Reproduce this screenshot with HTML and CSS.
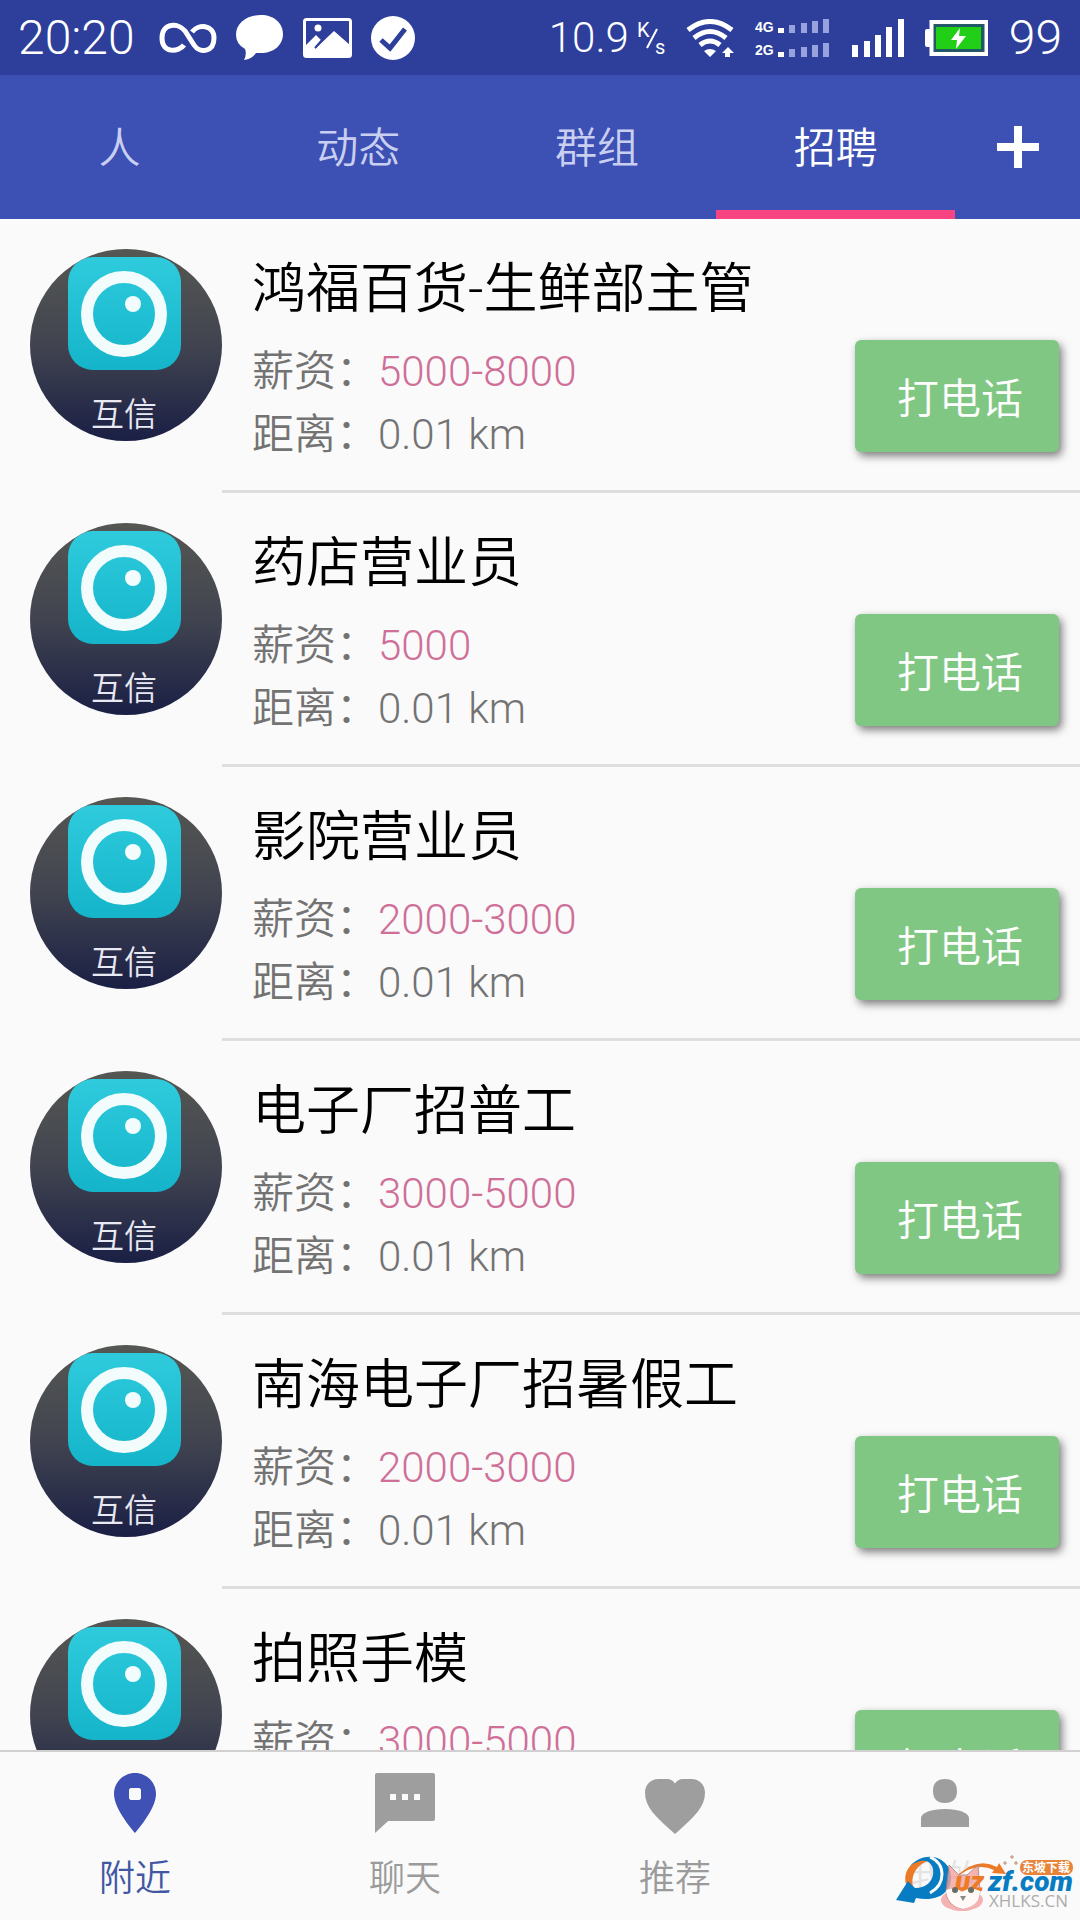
FILE: index.html
```html
<!DOCTYPE html>
<html lang="zh-CN">
<head>
<meta charset="utf-8">
<meta name="viewport" content="width=device-width, initial-scale=1">
<title>招聘</title>
<link rel="stylesheet" href="styles.css">
</head>
<body>
<svg class="defs" aria-hidden="true">
  <defs>
    <linearGradient id="night" x1="0" y1="0" x2="0" y2="1">
      <stop offset="0" stop-color="#555753"/><stop offset=".5" stop-color="#41444f"/><stop offset="1" stop-color="#1a1f45"/>
    </linearGradient>
    <linearGradient id="aqua" x1="0" y1="0" x2="0" y2="1">
      <stop offset="0" stop-color="#2fcbdd"/><stop offset="1" stop-color="#14b4ca"/>
    </linearGradient>
    <clipPath id="round"><circle cx="96" cy="96" r="96"/></clipPath>
    <symbol id="avatar" viewBox="0 0 192 192">
      <g clip-path="url(#round)">
        <rect width="192" height="192" fill="url(#night)"/>
        <rect x="38" y="8" width="113" height="113" rx="25" fill="url(#aqua)"/>
        <circle cx="94" cy="65" r="37" fill="none" stroke="#f2fcfd" stroke-width="12"/>
        <circle cx="103" cy="55" r="8" fill="#f2fcfd"/>
        <text x="94" y="177" class="avatar-text">互信</text>
      </g>
    </symbol>
  </defs>
</svg>

<div class="app">
  <header class="status">
    <span class="clock">20:20</span>
    <svg class="s-loop" width="58" height="44" viewBox="0 0 58 44"><g fill="none" stroke="#fff" stroke-width="5"><path d="M25 29C20 36 3 38 3 22S20 7 26 15L35 29C41 38 55 36 55 22S39 8 33 16" /></g></svg>
    <svg class="s-chat" width="48" height="46" viewBox="0 0 48 46"><path fill="#fff" d="M25 0C38 0 47 8 47 19S38 38 25 38H20Q16 44 8 45Q11 39 9 34Q0 29 0 20C0 8 11 0 25 0Z"/></svg>
    <svg class="s-image" width="49" height="40" viewBox="0 0 49 40"><rect x="1.500" y="1.500" width="46" height="37" rx="2" fill="none" stroke="#fff" stroke-width="3"/><circle cx="15" cy="10" r="3.500" fill="#fff"/><path fill="#fff" d="M2 38V28L13 17L18 22L12 31L31 13L47 27V38Z"/><path d="M12 30L20 21" stroke="#2d3e9b" stroke-width="2"/></svg>
    <svg class="s-check" width="44" height="44" viewBox="0 0 44 44"><circle cx="22" cy="22" r="22" fill="#fff"/><path d="M10 24L19 32L34 13" fill="none" stroke="#2d3e9b" stroke-width="5"/></svg>
    <span class="spacer"></span>
    <span class="speed">10.9</span>
    <span class="unit"><svg width="31" height="38" viewBox="0 0 31 38"><text x="0" y="18" class="unit-text">K</text><path d="M10 29L20 10" stroke="#fff" stroke-width="2"/><text x="18" y="35" class="unit-text">s</text></svg></span>
    <svg class="s-wifi" width="49" height="38" viewBox="0 0 49 38"><g fill="none" stroke="#fff" stroke-width="5"><path d="M2 11Q24 -6 46 11"/><path d="M8 19Q24 6 40 19"/><path d="M14 26Q24 18 34 26"/></g><path fill="#fff" d="M18 32Q24 28 30 32L24 38ZM42 28L48 34H44V38H39V34H36Z"/></svg>
    <svg class="s-dual" width="76" height="40" viewBox="0 0 76 40"><g class="net"><text x="0" y="14">4G</text><text x="0" y="37">2G</text></g><g fill="#fff"><rect x="23" y="10" width="6" height="5"/><rect x="23" y="34" width="6" height="5"/></g><g fill="#98a2dc"><path d="M34 7h6v8h-6zM46 5h6v10h-6zM57 3h6v12h-6zM68 1h6v14h-6zM34 31h6v8h-6zM46 29h6v10h-6zM57 27h6v12h-6zM68 25h6v14h-6z"/></g></svg>
    <svg class="s-signal" width="52" height="38" viewBox="0 0 52 38"><path fill="#fff" d="M0 26h6v12H0zM12 22h6v16h-6zM23 16h6v22h-6zM34 8h6v30h-6zM46 0h6v38h-6z"/></svg>
    <svg class="s-battery" width="63" height="36" viewBox="0 0 63 36"><rect x="6.500" y="2" width="55" height="32" fill="#235867" stroke="#fff" stroke-width="4"/><rect x="0" y="9" width="6" height="18" rx="2" fill="#fff"/><rect x="11" y="7" width="45" height="22" fill="#22cf17"/><path fill="#fff" d="M35 8L26 20H32L31 29L41 16H34Z"/></svg>
    <span class="charge">99</span>
  </header>

  <nav class="tabs">
    <a href="#people" class="tab">人</a>
    <a href="#moments" class="tab">动态</a>
    <a href="#groups" class="tab">群组</a>
    <a href="#jobs" class="tab active" aria-current="page">招聘</a>
    <button class="add" aria-label="添加"><svg width="42" height="42" viewBox="0 0 42 42"><path d="M21 0V42M0 21H42" stroke="#fff" stroke-width="8"/></svg></button>
  </nav>

  <main class="jobs">
    <article class="job">
      <svg class="avatar"><use href="#avatar"/></svg>
      <div class="body"><div class="info"><h2>鸿福百货-生鲜部主管</h2><p>薪资：<span class="pay">5000-8000</span></p><p>距离：0.01 km</p></div><button class="call">打电话</button></div>
    </article>
    <article class="job">
      <svg class="avatar"><use href="#avatar"/></svg>
      <div class="body"><div class="info"><h2>药店营业员</h2><p>薪资：<span class="pay">5000</span></p><p>距离：0.01 km</p></div><button class="call">打电话</button></div>
    </article>
    <article class="job">
      <svg class="avatar"><use href="#avatar"/></svg>
      <div class="body"><div class="info"><h2>影院营业员</h2><p>薪资：<span class="pay">2000-3000</span></p><p>距离：0.01 km</p></div><button class="call">打电话</button></div>
    </article>
    <article class="job">
      <svg class="avatar"><use href="#avatar"/></svg>
      <div class="body"><div class="info"><h2>电子厂招普工</h2><p>薪资：<span class="pay">3000-5000</span></p><p>距离：0.01 km</p></div><button class="call">打电话</button></div>
    </article>
    <article class="job">
      <svg class="avatar"><use href="#avatar"/></svg>
      <div class="body"><div class="info"><h2>南海电子厂招暑假工</h2><p>薪资：<span class="pay">2000-3000</span></p><p>距离：0.01 km</p></div><button class="call">打电话</button></div>
    </article>
    <article class="job">
      <svg class="avatar"><use href="#avatar"/></svg>
      <div class="body"><div class="info"><h2>拍照手模</h2><p>薪资：<span class="pay">3000-5000</span></p><p>距离：0.01 km</p></div><button class="call">打电话</button></div>
    </article>
  </main>

  <nav class="bottom">
    <a href="#nearby" class="item active" aria-current="page"><svg viewBox="0 0 24 24"><path fill-rule="evenodd" d="M12 2C8.100 2 5 5.100 5 9c0 5.200 7 13 7 13s7-7.800 7-13c0-3.900-3.100-7-7-7zm-1.500 5h3l.5.500v3l-.5.500h-3l-.5-.5v-3z"/></svg>附近</a>
    <a href="#chat" class="item"><svg viewBox="0 0 24 24"><path fill-rule="evenodd" d="M21.300 2H2.700Q2 2 2 2.700V22l4.400-4H21.300Q22 18 22 17.300V2.700Q22 2 21.300 2zM9 11H7V9h2v2zm4 0h-2V9h2v2zm4 0h-2V9h2v2z"/></svg>聊天</a>
    <a href="#recommend" class="item"><svg viewBox="0 0 24 24"><path d="M12 22.300l-1.500-1.300C5.400 16.400 2 13.300 2 8.500 2 5.900 4 4 6.500 4H9.500Q11 4 12 5.500Q13 4 14.500 4H17.500C20 4 22 5.900 22 8.500c0 4.800-3.400 7.900-8.500 12.500z"/></svg>推荐</a>
    <a href="#me" class="item covered"><svg viewBox="0 0 24 24"><path d="M12 12c2.600 0 4-1.400 4-4s-1.400-4-4-4-4 1.400-4 4 1.400 4 4 4zm0 2c-4.500 0-8 1.300-8 3v3h16v-3c0-1.700-3.500-3-8-3z"/></svg>我的</a>
    <svg class="mark" width="184" height="68" viewBox="0 0 184 68" aria-hidden="true">
      <path d="M12 37C3 19 18 3 40 7C24 9 14 20 17 35Z" fill="#ec7b28"/>
      <path d="M14 14C30 -4 56 6 55 27C54 43 38 50 20 46L18 51L0 48L12 29L19 36C34 36 40 24 36 14C32 6 22 8 14 14Z" fill="#087cc2"/>
      <path d="M34 5C50 12 50 32 34 41" fill="none" stroke="#fafafa" stroke-width="3"/>
      <path d="M59 26Q80 4 101 15L103 11L110 22L96 21L98 18Q80 9 59 26Z" fill="#ec7b28"/>
      <path d="M109 9v4M107 11h4M116 3v4M114 5h4M120 9v4M118 11h4" stroke="#b98d72" stroke-width="1"/>
      <ellipse cx="66" cy="48" rx="21" ry="11" fill="#f19a98" opacity=".75"/>
      <path d="M50 38L53 13L63 23H71L82 13L84 39Q84 53 67 57Q50 54 50 38Z" fill="#f4a39f" stroke="#a97e7c" stroke-width="1" opacity=".8"/>
      <g class="brand"><text x="59" y="39" fill="#ec7b28">uz</text><text x="92" y="39" fill="#087cc2">zf.com</text></g>
      <path d="M50 38Q60 34 66 40Q74 34 84 39Q84 54 67 57Q51 54 50 38Z" fill="#fff9f7"/>
      <circle cx="59" cy="38" r="3" fill="#696e61"/><circle cx="75" cy="38" r="3" fill="#696e61"/><path d="M64 44h6l-3 5z" fill="#8b8989"/>
      <rect x="124" y="8" width="53" height="15" rx="7" fill="#e88339"/>
      <text x="150" y="20" class="brand-tag">东坡下载</text>
      <text x="93" y="55" class="site">XHLKS.CN</text>
    </svg>
  </nav>
</div>
</body>
</html>
```
FILE: styles.css
```css
* { box-sizing: border-box; }
body {
  margin: 0;
  background: #fafafa;
  font-family: Roboto, "Noto Sans CJK SC", sans-serif;
  font-weight: 350;
}
a { color: inherit; text-decoration: none; }
button { border: 0; padding: 0; font: inherit; color: inherit; }
svg { display: block; flex: none; }
.defs { position: absolute; width: 0; height: 0; }
.app { display: flex; flex-direction: column; height: 100vh; overflow: hidden; }

.status {
  display: flex;
  align-items: center;
  flex: none;
  height: 75px;
  padding: 0 18px;
  background: #2d3e9b;
  color: #fff;
  font-weight: 300;
}
.clock, .charge { font-size: 48px; line-height: 76px; }
.speed { font-size: 42px; }
.spacer { flex: 1; }
.s-loop { margin-left: 24px; }
.s-chat, .s-image, .s-check { margin-left: 19px; }
.unit { margin-left: 8px; }
.unit-text { font: 400 20px Roboto, sans-serif; fill: #fff; }
.s-wifi { margin-left: 18px; }
.s-dual { margin-left: 20px; }
.s-signal, .s-battery, .charge { margin-left: 21px; }
.net { font: 700 14px "Liberation Sans", sans-serif; fill: #fff; }

.tabs { display: flex; flex: none; height: 144px; background: #3d50b3; color: #fff; font-size: 42px; }
.tab {
  display: flex;
  align-items: center;
  justify-content: center;
  flex: 239;
  padding-top: 3px;
  border-bottom: 9px solid transparent;
  color: #c9cff0;
}
.tab.active { color: #fff; border-bottom-color: #f84482; }
.add { display: flex; align-items: center; justify-content: center; flex: 125; background: none; }

.jobs { flex: 1; min-height: 0; overflow: hidden; }
.job { display: flex; height: 274px; padding-left: 30px; }
.avatar { width: 192px; height: 192px; margin-top: 30px; }
.avatar-text { font: 350 33px "Noto Sans CJK SC", sans-serif; fill: #e8e9f2; text-anchor: middle; }
.body {
  display: flex;
  flex: 1;
  justify-content: space-between;
  padding: 30px 21px 0 30px;
  border-bottom: 3px solid #dedede;
}
.info { color: #737373; font-size: 42px; }
.info h2 { margin: 5px 0 14px; color: #000; font-size: 54px; font-weight: 350; line-height: 72px; }
.info p { margin: 0; line-height: 63px; }
.pay { color: #cf6f98; }
.call {
  width: 204px;
  height: 112px;
  margin-top: 91px;
  padding: 0 0 2px 6px;
  border-radius: 6px;
  background: #81c784;
  box-shadow: 3px 4px 8px rgba(0, 0, 0, .5);
  color: #fff;
  font-size: 42px;
}

.bottom {
  position: relative;
  display: flex;
  flex: none;
  height: 170px;
  border-top: 2px solid #d0d0d0;
  background: #fafafa;
}
.item {
  display: flex;
  flex: 1;
  flex-direction: column;
  align-items: center;
  gap: 14px;
  padding-top: 15px;
  color: #9b9b9b;
  fill: #9e9e9e;
  font-size: 36px;
  line-height: 52px;
}
.item svg { width: 72px; height: 72px; }
.item.active { color: #4257a3; fill: #3f51b5; }
.item.covered { color: #e4e4e6; }
.mark { position: absolute; right: 0; bottom: 0; }
.brand { font: italic 900 28px Roboto, sans-serif; }
.brand-tag { font: 700 12px "Noto Sans CJK SC", sans-serif; fill: #fff; text-anchor: middle; }
.site { font: 400 17px "Open Sans", sans-serif; fill: #adadad; }
```
